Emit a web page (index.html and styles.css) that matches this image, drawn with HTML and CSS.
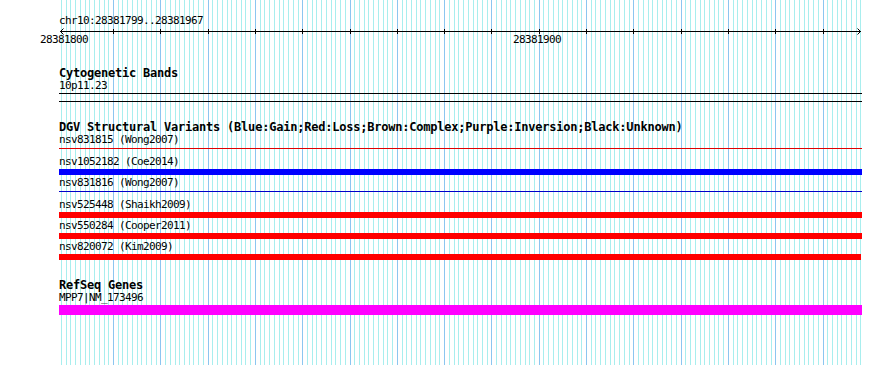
FILE: index.html
```html
<!DOCTYPE html>
<html lang="en">
<head>
    <meta charset="UTF-8">
    <title>chr10:28381799..28381967</title>
    <link rel="stylesheet" href="styles.css">
</head>
<body>

    <div class="panel">
        <svg class="grid" id="grid" width="890" height="365"></svg>

        <div class="content">
            <div class="chrom">chr10:28381799..28381967</div>

            <div class="ruler">
                <svg class="axis" id="axis" width="803" height="8">
                    <line x1="1" y1="4.5" x2="802" y2="4.5"></line>
                    <polyline points="4.5,1.5 1.5,4.5 4.5,7.5"></polyline>
                    <polyline points="798.5,1.5 801.5,4.5 798.5,7.5"></polyline>
                </svg>
                <span class="tick-label" style="left:-19px">28381800</span>
                <span class="tick-label" style="left:454px">28381900</span>
            </div>

            <div class="track">
                <div class="track-title">Cytogenetic Bands</div>
                <div class="feature-label">10p11.23</div>
                <div class="band"></div>
            </div>

            <div class="track">
                <div class="track-title">DGV Structural Variants (Blue:Gain;Red:Loss;Brown:Complex;Purple:Inversion;Black:Unknown)</div>

                <div class="variant">
                    <div class="feature-label">nsv831815 (Wong2007)</div>
                    <div class="glyph"><div class="line loss"></div></div>
                </div>
                <div class="variant">
                    <div class="feature-label">nsv1052182 (Coe2014)</div>
                    <div class="glyph"><div class="bar gain"></div></div>
                </div>
                <div class="variant">
                    <div class="feature-label">nsv831816 (Wong2007)</div>
                    <div class="glyph"><div class="line gain-thin"></div></div>
                </div>
                <div class="variant">
                    <div class="feature-label">nsv525448 (Shaikh2009)</div>
                    <div class="glyph"><div class="bar loss"></div></div>
                </div>
                <div class="variant">
                    <div class="feature-label">nsv550284 (Cooper2011)</div>
                    <div class="glyph"><div class="bar loss"></div></div>
                </div>
                <div class="variant">
                    <div class="feature-label">nsv820072 (Kim2009)</div>
                    <div class="glyph"><div class="bar loss short"></div></div>
                </div>
            </div>

            <div class="track">
                <div class="track-title">RefSeq Genes</div>
                <div class="feature-label">MPP7|NM_173496</div>
                <div class="gene"></div>
            </div>
        </div>
    </div>

    <script>
        // one grid line per base, x = 61 + 4.73 * k
        const ns = 'http://www.w3.org/2000/svg';
        const grid = document.getElementById('grid');
        const axis = document.getElementById('axis');

        for (let k = 0; k < 170; k++) {
            const x = Math.round(61 + 4.73 * k) + 0.5;
            const line = document.createElementNS(ns, 'line');
            line.setAttribute('x1', x);
            line.setAttribute('x2', x);
            line.setAttribute('y1', 0);
            line.setAttribute('y2', 365);
            line.setAttribute('class', (k >= 11 && (k - 1) % 10 === 0) ? 'major' : 'minor');
            grid.appendChild(line);
        }

        for (let k = 11; k <= 161; k += 10) {
            const x = Math.round(61 + 4.73 * k) - 59 + 0.5;
            const tick = document.createElementNS(ns, 'line');
            tick.setAttribute('x1', x);
            tick.setAttribute('x2', x);
            tick.setAttribute('y1', 2);
            tick.setAttribute('y2', 7);
            axis.appendChild(tick);
        }
    </script>

</body>
</html>
```

FILE: styles.css
```css
body {
    margin: 0;
    background-color: #fff;
    color: #000;
}

.panel {
    position: relative;
    width: 890px;
    height: 365px;
    overflow: hidden;
}

.grid {
    position: absolute;
    top: 0;
    left: 0;
}

.grid line {
    stroke-width: 1;
}

.grid .minor {
    stroke: #a8eeee;
}

.grid .major {
    stroke: #8cc6f0;
}

.content {
    position: relative;
    width: 803px;
    margin-left: 59px;
    padding-top: 15px;
}

.chrom,
.feature-label,
.tick-label {
    font-family: "DejaVu Sans Mono", "Liberation Mono", monospace;
    font-size: 11px;
    letter-spacing: -0.62px;
    line-height: 12px;
    white-space: nowrap;
}

.track-title {
    font-family: "DejaVu Sans Mono", "Liberation Mono", monospace;
    font-weight: bold;
    font-size: 12px;
    letter-spacing: -0.22px;
    line-height: 13px;
    white-space: nowrap;
}

/* Ruler */
.ruler {
    position: relative;
    height: 40px;
}

.axis {
    display: block;
}

.axis line,
.axis polyline {
    stroke: #000;
    stroke-width: 1;
    fill: none;
}

.tick-label {
    position: absolute;
    top: 7px;
}

/* Tracks */
.track + .track {
    margin-top: 19px;
}

.band {
    box-sizing: border-box;
    height: 9px;
    margin-top: 1px;
    border-top: 1px solid #000;
    border-bottom: 1px solid #000;
}

.glyph {
    height: 6px;
    margin: 1px 0 2px;
}

.bar {
    height: 6px;
}

.line {
    height: 1px;
    margin-top: 2px;
}

.bar.gain {
    background-color: #0000ff;
}

.bar.loss {
    background-color: #ff0000;
}

.line.loss {
    background-color: #e00000;
}

.line.gain-thin {
    background-color: #0000c8;
}

.bar.short {
    width: 802px;
}

.gene {
    height: 10px;
    margin-top: 1px;
    background-color: #ff00ff;
}
```
